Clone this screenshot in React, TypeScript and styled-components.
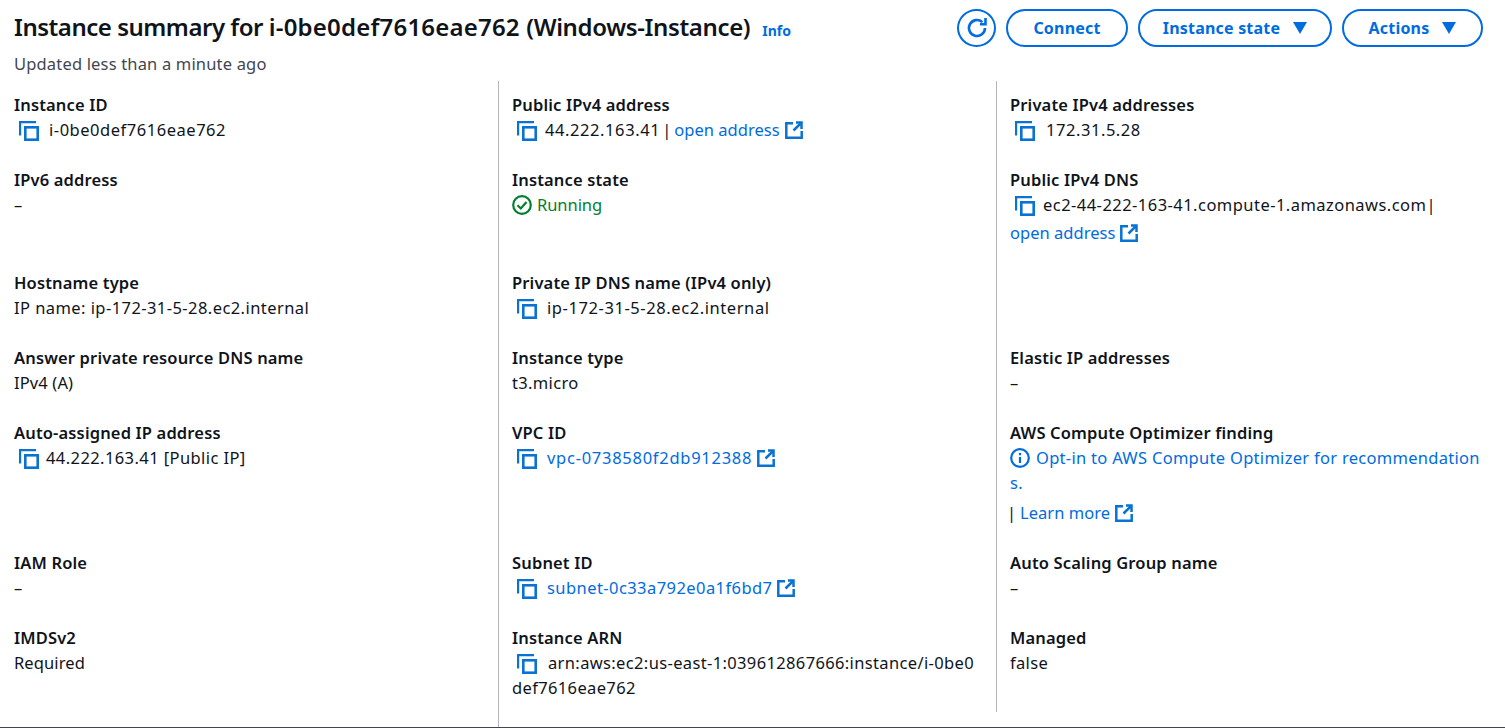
import React from "react";
import styled, { createGlobalStyle } from "styled-components";

const Global = createGlobalStyle`
  html, body { margin: 0; padding: 0; background: #fff; }
  body { font-family: "Noto Sans", "Open Sans", sans-serif; color: #0f141b; font-size: 16.5px; line-height: 20px; overflow: hidden; }
`;
const Page = styled.div`
  width: 1505px; height: 728px; box-sizing: border-box; overflow: hidden;
  border-bottom: 1px solid #424650; display: flex; flex-direction: column;
`;
const Header = styled.header`
  display: flex; justify-content: space-between; align-items: flex-start;
  height: 81px; padding: 9px 22px 0 14px; box-sizing: border-box;
`;
const TitleBlock = styled.div`display: flex; flex-direction: column;`;
const TitleRow = styled.div`display: flex; align-items: baseline; gap: 12px; height: 36px; line-height: 36px;`;
const Title = styled.h1`margin: 0; font-size: 24px; font-weight: 650; color: #0f141a; white-space: nowrap;`;
const Info = styled.a`font-size: 14px; font-weight: 700; color: #006ce0;`;
const Updated = styled.div`margin-top: 9px; color: #424650; line-height: 20px; letter-spacing: 0.17px;`;
const Actions = styled.div`display: flex; gap: 10px; align-items: center;`;
const Button = styled.button<{ $w: number }>`
  width: ${(p) => p.$w}px; height: 38px; box-sizing: border-box; border: 2px solid #006ce0; border-radius: 20px;
  background: #fff; color: #006ce0; font: 700 16px "Noto Sans", sans-serif; padding: 0; letter-spacing: 0.2px;
  display: flex; align-items: center; justify-content: center; gap: 13px;
`;
const RoundButton = styled(Button)`border-radius: 50%;`;
const Grid = styled.main`display: flex; flex: 1; min-height: 0;`;
const Column = styled.section<{ $first?: boolean; $w: number; $end?: number }>`
  width: ${(p) => p.$w}px; box-sizing: border-box; padding: 11px 20px 0 14px;
  position: relative;
  ${(p) => !p.$first && `&::before { content: ""; position: absolute; left: 0; top: 0; bottom: ${p.$end ?? 0}px; width: 1px; background: #b4b4bb; }`}
`;
const Field = styled.div<{ $h: number }>`height: ${(p) => p.$h}px; box-sizing: border-box;`;
const Label = styled.div`font-weight: 600; color: #0f141a; line-height: 25px; white-space: nowrap; letter-spacing: 0.15px;`;
const Value = styled.div`line-height: 25px; color: #0f141b; white-space: nowrap;`;
const LinkLine = styled.div<{ $top: number }>`margin-top: ${(p) => p.$top}px;`;
const Track = styled.span<{ $s: number }>`letter-spacing: ${(p) => p.$s}px;`;
const Bar = styled.span`margin: 0 3px 0 2px;`;
const LeadBar = styled.span`margin: 0 4px 0 -3px;`;
const CopyGap = styled.span<{ $l: number; $r: number }>`
  display: inline-flex; vertical-align: -5px; margin: 0 ${(p) => p.$r}px 0 ${(p) => p.$l}px;
`;
const Link = styled.a<{ $s?: number }>`color: #006ce0; letter-spacing: ${(p) => p.$s ?? 0.02}px;`;
const Success = styled.div`display: flex; align-items: center; gap: 5px; color: #00802f; line-height: 25px;`;
const IconWrap = styled.span`display: inline-flex; vertical-align: -3px; margin-left: 5px;`;
const InfoWrap = styled.span`display: inline-flex; vertical-align: -4px; margin-right: 6px;`;

const Copy = ({ l = 5, r = 10 }: { l?: number; r?: number }) => (
  <CopyGap $l={l} $r={r}>
    <svg width="20" height="20" viewBox="0 0 20 20" fill="none" stroke="#0972d3" strokeWidth="2.6">
      <path d="M1.1 14.5V1.1H17" strokeWidth="2.2" />
      <rect x="6.3" y="6.3" width="12.4" height="12.4" />
    </svg>
  </CopyGap>
);
const External = () => (
  <IconWrap>
    <svg width="18" height="18" viewBox="0 0 18 18" fill="none" stroke="#0972d3" strokeWidth="2.5">
      <path d="M8 2.2H1.3v14.5H16.7V10" />
      <path d="M11 1.5h5.5V8" />
      <path d="M16.2 1.8 8.5 9.5" />
    </svg>
  </IconWrap>
);
const Caret = () => (
  <svg width="14" height="12" viewBox="0 0 14 12"><path d="M0 0h14L7 12z" fill="#006ce0" /></svg>
);
const Running = () => (
  <svg width="20" height="20" viewBox="0 0 20 20" fill="none" stroke="#00802f" strokeWidth="2.2">
    <circle cx="10" cy="10" r="8.8" />
    <path d="M5.5 10.2 8.8 13.5 14.5 7" />
  </svg>
);
const InfoCircle = () => (
  <InfoWrap>
    <svg width="20" height="20" viewBox="0 0 20 20" fill="none" stroke="#006ce0" strokeWidth="2.2">
      <circle cx="10" cy="10" r="8.8" />
      <path d="M10 9v6M10 5v2.2" />
    </svg>
  </InfoWrap>
);
const Refresh = () => (
  <svg width="24" height="24" viewBox="0 0 24 24" fill="none" stroke="#006ce0" strokeWidth="2.6">
    <path d="M20 12a8 8 0 1 1-2.6-5.9" />
    <path d="M20.5 2v6.2h-5.5" />
  </svg>
);

export default function App() {
  return (
    <Page>
      <Global />
      <Header>
        <TitleBlock>
          <TitleRow>
            <Title><Track $s={-0.48}>Instance summary for </Track><Track $s={0.2}>i-0be0def7616eae762 </Track><Track $s={-0.36}>(Windows-Instance)</Track></Title>
            <Info>Info</Info>
          </TitleRow>
          <Updated>Updated less than a minute ago</Updated>
        </TitleBlock>
        <Actions>
          <RoundButton $w={39}><Refresh /></RoundButton>
          <Button $w={122}>Connect</Button>
          <Button $w={194}>Instance state <Caret /></Button>
          <Button $w={141}>Actions <Caret /></Button>
        </Actions>
      </Header>
      <Grid>
        <Column $first $w={498}>
          <Field $h={75}><Label>Instance ID</Label><Value><Copy l={5} r={10} /><Track $s={0.53}>i-0be0def7616eae762</Track></Value></Field>
          <Field $h={103}><Label>IPv6 address</Label><Value>–</Value></Field>
          <Field $h={75}><Label>Hostname type</Label><Value><Track $s={0.43}>IP name: ip-172-31-5-28.ec2.internal</Track></Value></Field>
          <Field $h={75}><Label>Answer private resource DNS name</Label><Value><Track $s={0.13}>IPv4 (A)</Track></Value></Field>
          <Field $h={130}><Label>Auto-assigned IP address</Label><Value><Copy l={5} r={7} /><Track $s={0.41}>44.222.163.41 [Public IP]</Track></Value></Field>
          <Field $h={75}><Label>IAM Role</Label><Value>–</Value></Field>
          <Field $h={75}><Label>IMDSv2</Label><Value><Track $s={0.1}>Required</Track></Value></Field>
        </Column>
        <Column $w={498}>
          <Field $h={75}><Label>Public IPv4 address</Label><Value><Copy l={5} r={8} /><Track $s={0.58}>44.222.163.41</Track><Bar>|</Bar><Link>open address</Link><External /></Value></Field>
          <Field $h={103}><Label>Instance state</Label><Success><Running /><Track $s={-0.05}>Running</Track></Success></Field>
          <Field $h={75}><Label>Private IP DNS name (IPv4 only)</Label><Value><Copy l={5} r={10} /><Track $s={0.58}>ip-172-31-5-28.ec2.internal</Track></Value></Field>
          <Field $h={75}><Label>Instance type</Label><Value><Track $s={0.33}>t3.micro</Track></Value></Field>
          <Field $h={130}><Label>VPC ID</Label><Value><Copy l={5} r={10} /><Link $s={0.73}>vpc-0738580f2db912388</Link><External /></Value></Field>
          <Field $h={75}><Label>Subnet ID</Label><Value><Copy l={5} r={10} /><Link $s={0.43}>subnet-0c33a792e0a1f6bd7</Link><External /></Value></Field>
          <Field $h={75}><Label>Instance ARN</Label><Value><Copy l={5} r={11} /><Track $s={0.36}>arn:aws:ec2:us-east-1:039612867666:instance/i-0be0<br />def7616eae762</Track></Value></Field>
        </Column>
        <Column $w={509} $end={15}>
          <Field $h={75}><Label>Private IPv4 addresses</Label><Value><Copy l={5} r={11} /><Track $s={0.55}>172.31.5.28</Track></Value></Field>
          <Field $h={103}><Label>Public IPv4 DNS</Label><Value><Copy l={5} r={8} /><Track $s={0.46}>ec2-44-222-163-41.compute-1.amazonaws.com</Track>|<LinkLine $top={3}><Link>open address</Link><External /></LinkLine></Value></Field>
          <Field $h={75} />
          <Field $h={75}><Label>Elastic IP addresses</Label><Value>–</Value></Field>
          <Field $h={130}><Label>AWS Compute Optimizer finding</Label><Value><Link $s={0.29}><InfoCircle />Opt-in to AWS Compute Optimizer for recommendation<br />s.</Link><LinkLine $top={5}><LeadBar>|</LeadBar><Link>Learn more</Link><External /></LinkLine></Value></Field>
          <Field $h={75}><Label>Auto Scaling Group name</Label><Value>–</Value></Field>
          <Field $h={75}><Label>Managed</Label><Value><Track $s={0.33}>false</Track></Value></Field>
        </Column>
      </Grid>
    </Page>
  );
}
